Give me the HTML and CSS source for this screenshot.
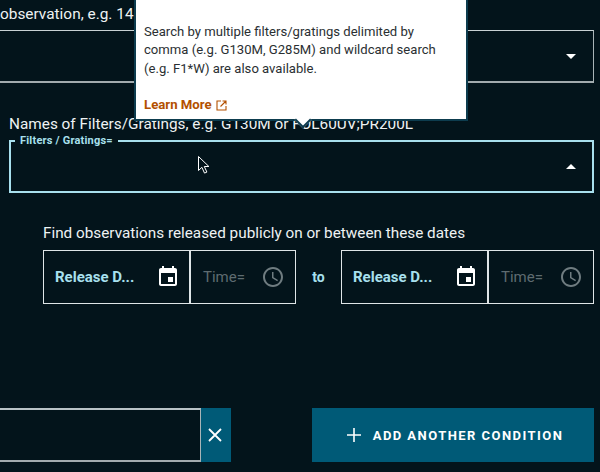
FILE: index.html
```html
<!DOCTYPE html>
<html>

<head>
	<meta charset="utf-8">
	<title>Search conditions</title>
	<link rel="stylesheet" href="styles.css">
</head>

<body>
	<div class="page">
		<div class="top_label">observation, e.g. 14</div>
		<div class="select_box">
			<svg class="caret" width="10" height="5" viewBox="0 0 10 5"><path d="M0 0l5 5 5-5z"/></svg>
		</div>

		<div class="names_label">Names of Filters/Gratings, e.g. G130M or FOL60UV;PR200L</div>
		<div class="filter_box">
			<div class="legend">Filters / Gratings=</div>
			<svg class="caret" width="10" height="5" viewBox="0 0 10 5"><path d="M0 5l5-5 5 5z"/></svg>
			<svg class="pointer" width="14" height="20" viewBox="0 0 14 20"><path d="M1.5 1.5v14l3.4-3.2 2.6 5.8 2.4-1-2.6-5.6h4.6z"/></svg>
		</div>

		<div class="dates">
			<div class="dates_label">Find observations released publicly on or between these dates</div>
			<div class="date_row">
				<div class="date_pair">
					<div class="date_field">
						<span class="date_name">Release D...</span>
						<svg width="24" height="24" viewBox="0 0 24 24" fill="#fff"><path d="M17 12h-5v5h5v-5zM16 1v2H8V1H6v2H5c-1.1 0-2 .9-2 2v14c0 1.1.9 2 2 2h14c1.1 0 2-.9 2-2V5c0-1.1-.9-2-2-2h-1V1h-2zm3 18H5V8h14v11z"/></svg>
					</div>
					<div class="time_field">
						<span>Time=</span>
						<svg width="24" height="24" viewBox="0 0 24 24" fill="#6f7c80"><path d="M11.99 2C6.47 2 2 6.48 2 12s4.47 10 9.99 10C17.52 22 22 17.52 22 12S17.52 2 11.99 2zM12 20c-4.42 0-8-3.58-8-8s3.58-8 8-8 8 3.58 8 8-3.58 8-8 8zm.5-13H11v6l5.25 3.15.75-1.23-4.5-2.67z"/></svg>
					</div>
				</div>
				<div class="to">to</div>
				<div class="date_pair">
					<div class="date_field">
						<span class="date_name">Release D...</span>
						<svg width="24" height="24" viewBox="0 0 24 24" fill="#fff"><path d="M17 12h-5v5h5v-5zM16 1v2H8V1H6v2H5c-1.1 0-2 .9-2 2v14c0 1.1.9 2 2 2h14c1.1 0 2-.9 2-2V5c0-1.1-.9-2-2-2h-1V1h-2zm3 18H5V8h14v11z"/></svg>
					</div>
					<div class="time_field">
						<span>Time=</span>
						<svg width="24" height="24" viewBox="0 0 24 24" fill="#6f7c80"><path d="M11.99 2C6.47 2 2 6.48 2 12s4.47 10 9.99 10C17.52 22 22 17.52 22 12S17.52 2 11.99 2zM12 20c-4.42 0-8-3.58-8-8s3.58-8 8-8 8 3.58 8 8-3.58 8-8 8zm.5-13H11v6l5.25 3.15.75-1.23-4.5-2.67z"/></svg>
					</div>
				</div>
			</div>
		</div>

		<div class="bottom_row">
			<div class="search_group">
				<div class="search_input"></div>
				<button class="clear_btn">
					<svg width="14" height="14" viewBox="0 0 14 14"><path d="M1 1l12 12M13 1L1 13" stroke="#fff" stroke-width="1.8"/></svg>
				</button>
			</div>
			<button class="add_btn">
				<svg width="14" height="14" viewBox="0 0 14 14"><path d="M7 0v14M0 7h14" stroke="#fff" stroke-width="1.6"/></svg>
				ADD ANOTHER CONDITION
			</button>
		</div>
	</div>

	<div class="tooltip">
		<p>Search by multiple filters/gratings delimited by comma (e.g. G130M, G285M) and wildcard search (e.g. F1*W) are also available.</p>
		<a class="learn_more">
			<span>Learn More</span>
			<svg width="11" height="11" viewBox="0 0 11 11" fill="none" stroke="#b35000" stroke-width="1.1"><path d="M5 1H1v9h9V6M6.5 1H10v3.500M10 1L4.500 6.500"/></svg>
		</a>
	</div>
</body>

</html>
```

FILE: styles.css
```css
* {
	box-sizing: border-box;
}
body {
	margin: 0;
	width: 600px;
	height: 472px;
	overflow: hidden;
	position: relative;
	background: #03141b;
	font-family: Roboto, "Liberation Sans", sans-serif;
	color: #eef2f3;
}
.page {
	padding-top: 6px;
}
.top_label {
	font-size: 15.4px;
	line-height: 17px;
}
.select_box {
	height: 53px;
	margin: 7px 6px 0 -4px;
	border: 1px solid #a9b4b7;
	border-top-color: #c9d2d4;
	border-bottom: 2px solid #a2abae;
	display: flex;
	align-items: center;
	justify-content: flex-end;
	padding-right: 17px;
}
.caret {
	fill: #fff;
}
.names_label {
	margin: 32px 0 0 9px;
	font-size: 15.35px;
	line-height: 18px;
}
.filter_box {
	height: 53px;
	margin: 7px 6px 0 9px;
	border: 2px solid #a8e0ee;
	position: relative;
	display: flex;
	align-items: center;
	justify-content: flex-end;
	padding-right: 16px;
}
.legend {
	position: absolute;
	left: 4px;
	top: -8px;
	padding: 0 5px 0 5px;
	background: #03141b;
	color: #a8e0ee;
	font-size: 11px;
	font-weight: 700;
	line-height: 13px;
	letter-spacing: 0.2px;
}
.pointer {
	position: absolute;
	left: 186px;
	top: 13px;
	fill: #03141b;
	stroke: #fff;
	stroke-width: 1;
}
.dates {
	margin: 31px 6px 0 43px;
}
.dates_label {
	font-size: 15.3px;
	line-height: 18px;
}
.date_row {
	display: flex;
	align-items: center;
	margin-top: 8px;
}
.date_pair {
	display: flex;
	width: 253px;
	height: 54px;
	border: 1px solid #dfe5e7;
}
.date_field {
	width: 147px;
	border-right: 2px solid #dfe5e7;
	display: flex;
	align-items: center;
	justify-content: space-between;
	padding: 0 9px 0 11px;
}
.date_name {
	color: #a8e0ee;
	font-size: 15px;
	font-weight: 700;
}
.time_field {
	flex: 1;
	display: flex;
	align-items: center;
	justify-content: space-between;
	padding: 0 10px 0 12px;
	color: #5e6b70;
	font-size: 15px;
}
.to {
	width: 45px;
	text-align: center;
	color: #a8e0ee;
	font-size: 14px;
	font-weight: 700;
}
.bottom_row {
	display: flex;
	justify-content: space-between;
	margin: 104px 6px 0 -4px;
	height: 54px;
}
.search_group {
	display: flex;
}
.search_input {
	width: 205px;
	border: 1px solid #a9b4b7;
	border-top: 2px solid #b9c3c6;
	border-bottom: 2px solid #a2abae;
}
.clear_btn {
	width: 30px;
	margin: 0;
	padding: 0 2px 0 0;
	border: 0;
	background: #005a77;
	display: flex;
	align-items: center;
	justify-content: center;
}
.add_btn {
	width: 282px;
	border: 0;
	padding: 0 0 0 4px;
	background: #005a77;
	color: #fff;
	font-family: inherit;
	font-size: 13px;
	font-weight: 700;
	letter-spacing: 1.45px;
	display: flex;
	align-items: center;
	justify-content: center;
	gap: 12px;
}
.tooltip {
	position: absolute;
	left: 134px;
	top: -20px;
	width: 334px;
	height: 141px;
	background: #fff;
	border: 2px solid #0d3c4e;
	border-top: 0;
	color: #2a2f32;
	font-size: 13.1px;
	line-height: 18.300px;
	padding: 43px 8px 0 8px;
}
.tooltip::after {
	content: "";
	position: absolute;
	left: 161px;
	bottom: -7px;
	width: 10px;
	height: 10px;
	background: #fff;
	border-right: 2px solid #0d3c4e;
	border-bottom: 2px solid #0d3c4e;
	transform: rotate(45deg);
}
.tooltip p {
	margin: 0;
}
.learn_more {
	display: flex;
	align-items: center;
	gap: 4px;
	margin-top: 18px;
	color: #b35000;
	font-weight: 700;
	font-size: 13.2px;
}
```
